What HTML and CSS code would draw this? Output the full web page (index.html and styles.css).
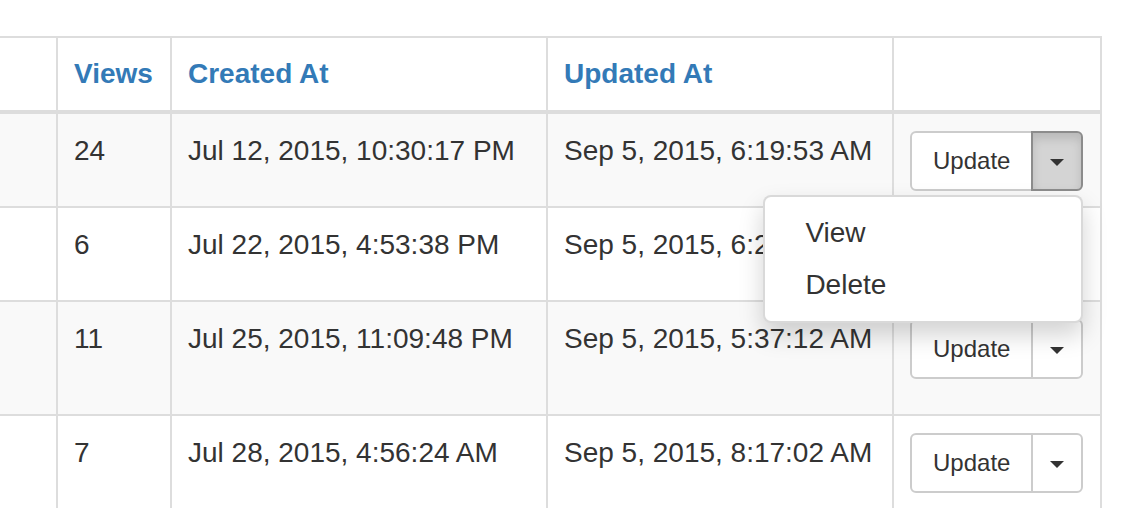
FILE: index.html
```html
<!DOCTYPE html>
<html lang="en">
<head>
<meta charset="utf-8">
<title>Posts</title>
<link rel="stylesheet" href="styles.css">
</head>
<body>
<div class="page">
  <table class="grid">
    <thead>
      <tr>
        <th class="col-title"></th>
        <th class="col-views"><a href="#" class="sort-link">Views</a></th>
        <th class="col-created"><a href="#" class="sort-link">Created At</a></th>
        <th class="col-updated"><a href="#" class="sort-link">Updated At</a></th>
        <th class="col-actions"></th>
      </tr>
    </thead>
    <tbody>
      <tr class="striped">
        <td></td>
        <td>24</td>
        <td>Jul 12, 2015, 10:30:17 PM</td>
        <td>Sep 5, 2015, 6:19:53 AM</td>
        <td>
          <div class="btn-group">
            <button class="btn btn-main">Update</button>
            <button class="btn btn-toggle is-open"><span class="caret"></span></button>
            <ul class="dropdown-menu">
              <li><a href="#" class="menu-item">View</a></li>
              <li><a href="#" class="menu-item">Delete</a></li>
            </ul>
          </div>
        </td>
      </tr>
      <tr>
        <td></td>
        <td>6</td>
        <td>Jul 22, 2015, 4:53:38 PM</td>
        <td>Sep 5, 2015, 6:21:40 AM</td>
        <td>
          <div class="btn-group">
            <button class="btn btn-main">Update</button>
            <button class="btn btn-toggle"><span class="caret"></span></button>
          </div>
        </td>
      </tr>
      <tr class="striped">
        <td><div class="title-spacer"></div></td>
        <td>11</td>
        <td>Jul 25, 2015, 11:09:48 PM</td>
        <td>Sep 5, 2015, 5:37:12 AM</td>
        <td>
          <div class="btn-group">
            <button class="btn btn-main">Update</button>
            <button class="btn btn-toggle"><span class="caret"></span></button>
          </div>
        </td>
      </tr>
      <tr>
        <td></td>
        <td>7</td>
        <td>Jul 28, 2015, 4:56:24 AM</td>
        <td>Sep 5, 2015, 8:17:02 AM</td>
        <td>
          <div class="btn-group">
            <button class="btn btn-main">Update</button>
            <button class="btn btn-toggle"><span class="caret"></span></button>
          </div>
        </td>
      </tr>
    </tbody>
  </table>
</div>
</body>
</html>
```

FILE: styles.css
```css
html, body {
  margin: 0;
  padding: 0;
  background: #fff;
}

body {
  font-family: "Liberation Sans", Helvetica, Arial, sans-serif;
  font-size: 28px;
  line-height: 40px;
  color: #333;
}

.page {
  padding-top: 36px;
}

.grid {
  table-layout: fixed;
  width: 1102px;
  border-collapse: separate;
  border-spacing: 0;
  border-top: 2px solid #ddd;
}

.grid th,
.grid td {
  box-sizing: border-box;
  padding: 16px;
  border-right: 2px solid #ddd;
  border-bottom: 2px solid #ddd;
  text-align: left;
  vertical-align: top;
  white-space: nowrap;
}

.grid td {
  padding-top: 17px;
  padding-bottom: 15px;
}

.grid th {
  vertical-align: bottom;
  border-bottom-width: 4px;
  font-weight: bold;
}

.col-title { width: 58px; }
.col-views { width: 114px; }
.col-created { width: 376px; }
.col-updated { width: 346px; }
.col-actions { width: 208px; }

.sort-link {
  color: #337ab7;
  text-decoration: none;
}

.striped td {
  background: #f9f9f9;
}

.title-spacer {
  height: 80px;
}

.btn-group {
  position: relative;
  display: inline-flex;
  vertical-align: top;
}

.btn {
  font-family: inherit;
  font-size: 24px;
  line-height: 36px;
  color: #333;
  background: #fff;
  border: 2px solid #ccc;
  border-radius: 6px;
  margin: 0;
  cursor: pointer;
}

.btn-main {
  padding: 10px 21px;
  border-top-right-radius: 0;
  border-bottom-right-radius: 0;
}

.btn-toggle {
  position: relative;
  padding: 10px 17px;
  margin-left: -2px;
  border-top-left-radius: 0;
  border-bottom-left-radius: 0;
  display: flex;
  align-items: center;
}

.btn-toggle.is-open {
  z-index: 2;
  background: #d4d4d4;
  border-color: #8c8c8c;
  box-shadow: inset 0 6px 10px rgba(0, 0, 0, 0.125);
}

.caret {
  display: block;
  width: 0;
  height: 0;
  margin-top: 2px;
  border-top: 7px solid #333;
  border-left: 7px solid transparent;
  border-right: 7px solid transparent;
}

.dropdown-menu {
  position: absolute;
  top: 100%;
  right: 0;
  z-index: 10;
  margin: 4px 0 0;
  padding: 10px 0;
  min-width: 320px;
  box-sizing: border-box;
  list-style: none;
  background: #fff;
  border: 2px solid rgba(0, 0, 0, 0.15);
  border-radius: 8px;
  box-shadow: 0 12px 24px rgba(0, 0, 0, 0.175);
  font-size: 28px;
  line-height: 40px;
}

.menu-item {
  display: block;
  padding: 6px 40px;
  color: #333;
  text-decoration: none;
  white-space: nowrap;
}
```
